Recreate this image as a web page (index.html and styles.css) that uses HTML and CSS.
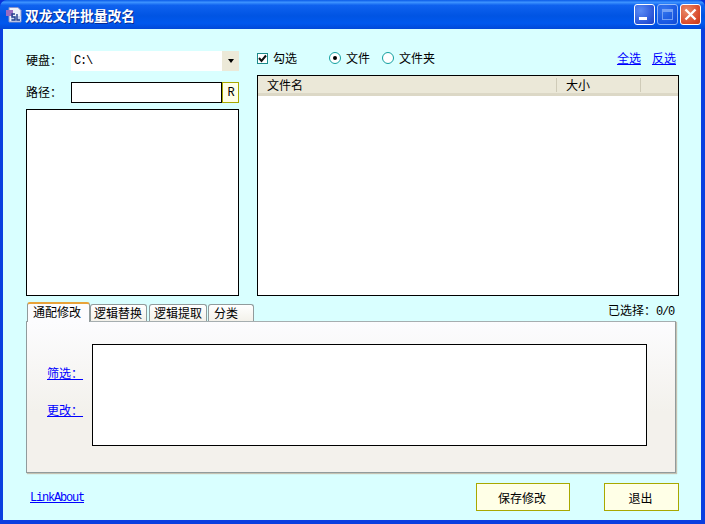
FILE: index.html
```html
<!DOCTYPE html>
<html lang="zh-CN">
<head>
<meta charset="utf-8">
<title>双龙文件批量改名</title>
<link rel="stylesheet" href="styles.css">
</head>
<body>
<div class="window">
  <header class="titlebar">
    <svg class="app-icon" width="17" height="17" viewBox="0 0 17 17">
      <path d="M3 1.500h9l3 3v11.500H3z" fill="#eef2fa" stroke="#8a94c8"/>
      <path d="M0 4h7v6H0z" fill="#9a6cc0"/>
      <path d="M5 10h10v5H5z" fill="#c6d2ee"/>
      <path d="M9 8H6v3h3v3H5.500M11 8v6h3" fill="none" stroke="#23408e" stroke-width="1.400"/>
    </svg>
    <span class="title-text">双龙文件批量改名</span>
    <div class="controls">
      <span class="ctl ctl-min"><i></i></span>
      <span class="ctl ctl-max"><i></i></span>
      <span class="ctl ctl-close">
        <svg width="21" height="21" viewBox="0 0 21 21"><path d="M5.500 5.500l10 10M15.500 5.500l-10 10" stroke="#fff" stroke-width="2.400" fill="none"/></svg>
      </span>
    </div>
  </header>
  <main class="client">
    <div class="top">
      <section class="left">
        <div class="row row-drive">
          <label class="lbl">硬盘<span class="colon">：</span></label>
          <div class="combo"><span class="latin combo-val">C:\</span><span class="combo-btn"><i></i></span></div>
        </div>
        <div class="row row-path">
          <label class="lbl">路径<span class="colon">：</span></label>
          <div class="path-box"></div>
          <button class="r-btn latin">R</button>
        </div>
        <div class="dir-list"></div>
      </section>
      <section class="right">
        <div class="opts">
          <label class="check">
            <span class="checkbox"><svg width="11" height="11" viewBox="0 0 11 11"><path d="M2 5l2.500 3L9 2.500" fill="none" stroke="#111" stroke-width="2"/></svg></span>勾选
          </label>
          <label class="radio radio-first"><span class="radio-dot on"></span>文件</label>
          <label class="radio radio-second"><span class="radio-dot"></span>文件夹</label>
          <span class="links"><a href="#">全选</a><a href="#">反选</a></span>
        </div>
        <div class="file-list">
          <div class="list-head">
            <span class="col col-name">文件名</span>
            <span class="col col-size">大小</span>
            <span class="col col-rest"></span>
          </div>
        </div>
      </section>
    </div>
    <section class="tabs-area">
      <div class="tabbar">
        <span class="tab active">通配修改</span>
        <span class="tab t2">逻辑替换</span>
        <span class="tab t3">逻辑提取</span>
        <span class="tab t4">分类</span>
        <span class="selected">已选择<span class="colon">：</span><span class="latin">0/0</span></span>
      </div>
      <div class="panel">
        <div class="side-links">
          <a href="#">筛选<span class="colon">：</span></a>
          <a href="#">更改<span class="colon">：</span></a>
        </div>
        <div class="editor"></div>
      </div>
    </section>
    <footer class="bottom">
      <a class="about latin" href="#">LinkAbout</a>
      <button class="btn btn-save">保存修改</button>
      <button class="btn btn-exit">退出</button>
    </footer>
  </main>
</div>
</body>
</html>
```
FILE: styles.css
```css
* { box-sizing: border-box; }
html, body { margin: 0; padding: 0; }
body {
  width: 705px;
  height: 524px;
  overflow: hidden;
  background: #0831d9;
  font-family: "Noto Sans CJK SC", "Liberation Sans", sans-serif;
  font-size: 12px;
  line-height: 14px;
  color: #000;
}
a { color: #0000ff; text-decoration: underline; }
.latin { font-family: "Liberation Mono", monospace; font-size: 12px; letter-spacing: -1.2px; font-weight: 400; }
.colon { font-family: "Noto Sans CJK TC", sans-serif; }

.window {
  width: 705px;
  height: 524px;
  display: flex;
  flex-direction: column;
  border-radius: 7px 7px 0 0;
  background: #0a3fe0;
  overflow: hidden;
}
.titlebar {
  height: 29px;
  flex: none;
  display: flex;
  align-items: center;
  padding: 0 3px 0 6px;
  background: linear-gradient(180deg, #0a5ae8 0%, #3d93ff 8%, #0f62ef 18%, #0054e3 55%, #0058ee 80%, #0148d8 100%);
}
.app-icon { flex: none; margin-right: 2px; }
.title-text {
  color: #fff;
  font-weight: 700;
  font-size: 13.75px;
  text-shadow: 1px 1px 0 #0a2a90;
  line-height: 16px;
}
.controls { margin-left: auto; display: flex; gap: 2px; padding-right: 1px; }
.ctl {
  width: 21px;
  height: 21px;
  border: 1px solid #fff;
  border-radius: 3px;
  display: block;
  position: relative;
  background: radial-gradient(circle at 30% 30%, #5b8cf4, #2a55d8 70%, #1e3fc0);
}
.ctl-min i {
  position: absolute;
  left: 4px;
  top: 12px;
  width: 8px;
  height: 3px;
  background: #fff;
}
.ctl-max { opacity: 0.55; }
.ctl-max i {
  position: absolute;
  left: 4px;
  top: 4px;
  width: 11px;
  height: 11px;
  border: 1px solid #cfdcff;
  border-top-width: 3px;
}
.ctl-close {
  background: radial-gradient(circle at 30% 30%, #e88a6a, #d8492a 70%, #c23a18);
}
.ctl-close svg { position: absolute; left: -1px; top: -1px; }

.client {
  flex: none;
  width: 698px;
  height: 491px;
  margin-left: 3px;
  background: #d9ffff;
  padding: 22px 0 0 23px;
  display: flex;
  flex-direction: column;
}
.top { display: flex; gap: 18px; height: 245px; flex: none; }
.left { width: 213px; display: flex; flex-direction: column; }
.right { width: 422px; display: flex; flex-direction: column; }

.row { display: flex; align-items: center; }
.row-drive { height: 20px; }
.row-path { height: 21px; margin-top: 11px; }
.lbl { width: 45px; flex: none; padding-bottom: 2px; }
.row-path .lbl { padding-bottom: 1px; }

.combo { flex: 1; height: 20px; background: #fff; display: flex; align-items: center; }
.combo-val { flex: 1; padding-left: 3px; }
.combo-btn {
  width: 17px;
  height: 20px;
  background: #ece9d8;
  display: flex;
  align-items: center;
  justify-content: center;
}
.combo-btn i {
  width: 0;
  height: 0;
  border: 3.5px solid transparent;
  border-top: 4px solid #000;
  border-bottom: 0;
}
.path-box { width: 151px; height: 21px; background: #fff; border: 1px solid #000; flex: none; }
.r-btn {
  width: 17px;
  height: 21px;
  padding: 0;
  background: #ffffe7;
  border: 1px solid #a8a800;
  color: #000;
  flex: none;
}
.dir-list { height: 187px; margin-top: 6px; background: #fff; border: 1px solid #000; }

.opts { height: 24px; display: flex; align-items: flex-start; position: relative; }
.check, .radio { display: flex; align-items: center; height: 16px; }
.check { width: 72px; margin-top: -1px; }
.checkbox {
  width: 11px;
  height: 11px;
  border: 1px solid #1c8a8a;
  background: #fff;
  margin: 1px 5px 0 0;
  display: block;
  overflow: hidden;
}
.checkbox svg { display: block; margin: -1px 0 0 -1px; }
.radio-first { width: 53px; margin-top: -1px; }
.radio-second { margin-top: -1px; }
.radio-dot {
  width: 12px;
  height: 12px;
  border: 1px solid #13a0a0;
  border-radius: 50%;
  background: #fff;
  margin: -1px 5px 0 0;
  position: relative;
  display: block;
}
.radio-dot.on::after {
  content: "";
  position: absolute;
  left: 3px;
  top: 3px;
  width: 4px;
  height: 4px;
  background: #000;
  border-radius: 50%;
}
.links { margin-left: auto; display: flex; gap: 11px; padding-right: 3px; }
.file-list { height: 221px; background: #fff; border: 1px solid #000; }
.list-head {
  height: 20px;
  display: flex;
  background: #ebe8d8;
  border-bottom: 3px solid #dcd8c6;
}
.col { display: block; padding: 0 0 0 9px; height: 14px; margin-top: 2px; line-height: 14px; }
.col-name { width: 299px; border-right: 1px solid #cfcbb8; }
.col-size { width: 84px; border-right: 1px solid #cfcbb8; }
.col-rest { flex: 1; }

.tabs-area { margin-top: 6px; width: 650px; flex: none; }
.tabbar { height: 19px; display: flex; align-items: flex-end; position: relative; z-index: 1; padding-left: 1px; }
.tab {
  height: 17px;
  border: 1px solid #919b9c;
  border-bottom: 0;
  border-radius: 3px 3px 0 0;
  background: linear-gradient(180deg, #fff, #f3f1ea);
  line-height: 15px;
  padding-left: 3px;
  flex: none;
}
.tab.active {
  height: 20px;
  width: 63px;
  margin-bottom: -1px;
  background: #fcfcfe;
  border-top: 2px solid #e8a33a;
  border-bottom: 0;
  padding-left: 5px;
  line-height: 15px;
}
.t2 { width: 57px; }
.t3 { width: 58px; margin-left: 2px; padding-left: 4px; }
.t4 { width: 46px; margin-left: 1px; padding-left: 5px; }
.selected { margin-left: auto; align-self: flex-start; margin-top: 1px; padding-right: 2px; white-space: nowrap; }

.panel {
  height: 152px;
  background: linear-gradient(180deg, #fcfcfe 0%, #f3f1ec 60%, #f3f1ec 100%);
  border: 1px solid #919b9c;
  border-top-color: #a6aeb0;
  box-shadow: 1px 1px 1px #c5c2b2;
  display: flex;
  padding: 22px 0 0 65px;
}
.side-links {
  width: 0;
  position: relative;
  flex: none;
}
.side-links a { position: absolute; white-space: nowrap; right: 9px; width: 36px; }
.side-links a:first-child { top: 22px; }
.side-links a:last-child { top: 59px; }
.editor { width: 555px; height: 102px; background: #fff; border: 1px solid #000; }

.bottom { margin-top: 10px; height: 28px; display: flex; align-items: center; padding-left: 4px; }
.about { flex: none; width: 446px; margin-top: 2px; }
.btn {
  height: 28px;
  background: #ffffe7;
  border: 1px solid #a8a800;
  font-family: inherit;
  font-size: 12px;
  color: #000;
  padding: 0 2px 0 0;
  flex: none;
}
.btn-save { width: 94px; }
.btn-exit { width: 75px; margin-left: 34px; }
```
